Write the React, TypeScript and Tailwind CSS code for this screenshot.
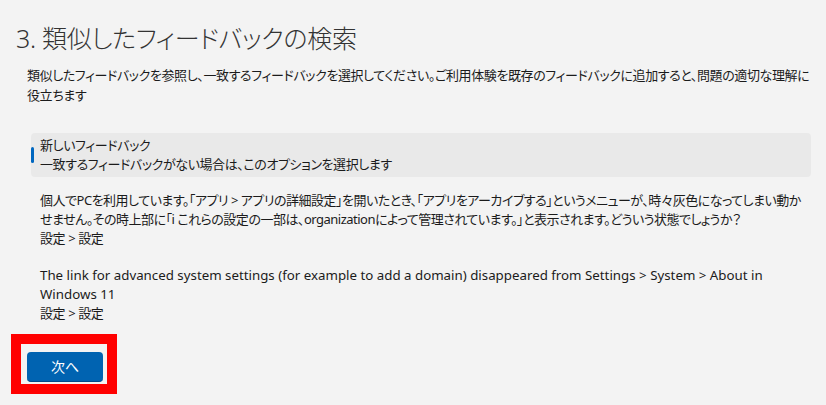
const jp = "font-['Segoe_UI','Noto_Sans','Noto_Sans_CJK_JP',sans-serif] [font-feature-settings:'palt']";

function SimilarItem({ lines, latin }: { lines: string[]; latin?: boolean }) {
  return (
    <div
      className={`pl-[40px] leading-[19px] text-[#1b1b1b] whitespace-nowrap ${
        latin ? "text-[13.3px]" : "text-[13px] tracking-[-0.5px]"
      }`}
    >
      {lines.map((line, i) => (
        <div key={i} className={i === lines.length - 1 ? "text-[13px] tracking-[-0.4px]" : ""}>
          {line}
        </div>
      ))}
    </div>
  );
}

export default function App() {
  return (
    <div
      className={`w-[826px] h-[405px] overflow-hidden bg-[#f3f3f3] text-[#1b1b1b] ${jp}`}
    >
      <h1 className="pl-[16px] pt-[19px] text-[25px] leading-[38px] font-light tracking-[-0.3px] text-[#333333]">
        3. 類似したフィードバックの検索
      </h1>

      <p className="mt-[8px] pl-[27px] text-[13px] tracking-[-0.4px] leading-[20px] whitespace-nowrap">
        類似したフィードバックを参照し、一致するフィードバックを選択してください。ご利用体験を既存のフィードバックに追加すると、問題の適切な理解に
        <br />
        役立ちます
      </p>

      <div className="mt-[28px] ml-[31px] w-[780px] h-[44px] rounded-[4px] bg-[#e9e9e9] flex items-center">
        <div className="w-[3px] h-[16px] rounded-full bg-[#0067c0]" />
        <div className="ml-[6px] text-[13px] tracking-[-0.4px] leading-[19px]">
          <div>新しいフィードバック</div>
          <div>一致するフィードバックがない場合は、このオプションを選択します</div>
        </div>
      </div>

      <div className="mt-[14px]">
        <SimilarItem
          lines={[
            "個人でPCを利用しています。「アプリ > アプリの詳細設定」を開いたとき、「アプリをアーカイブする」というメニューが、時々灰色になってしまい動か",
            "せません。その時上部に「i これらの設定の一部は、organizationによって管理されています。」と表示されます。どういう状態でしょうか？",
            "設定 > 設定",
          ]}
        />
      </div>

      <div className="mt-[18px]">
        <SimilarItem
          latin
          lines={[
            "The link for advanced system settings (for example to add a domain) disappeared from Settings > System > About in",
            "Windows 11",
            "設定 > 設定",
          ]}
        />
      </div>

      <div className="mt-[11px] ml-[11px] w-[106px] h-[60px] border-[10px] border-[#ff0000] bg-[#f3f3f3] pl-[6px] pt-[8px]">
        <button className="w-[76px] h-[30px] rounded-[4px] bg-[#0063b1] border-b border-[#00498a] text-white text-[14px] leading-[20px]">
          次へ
        </button>
      </div>
    </div>
  );
}
